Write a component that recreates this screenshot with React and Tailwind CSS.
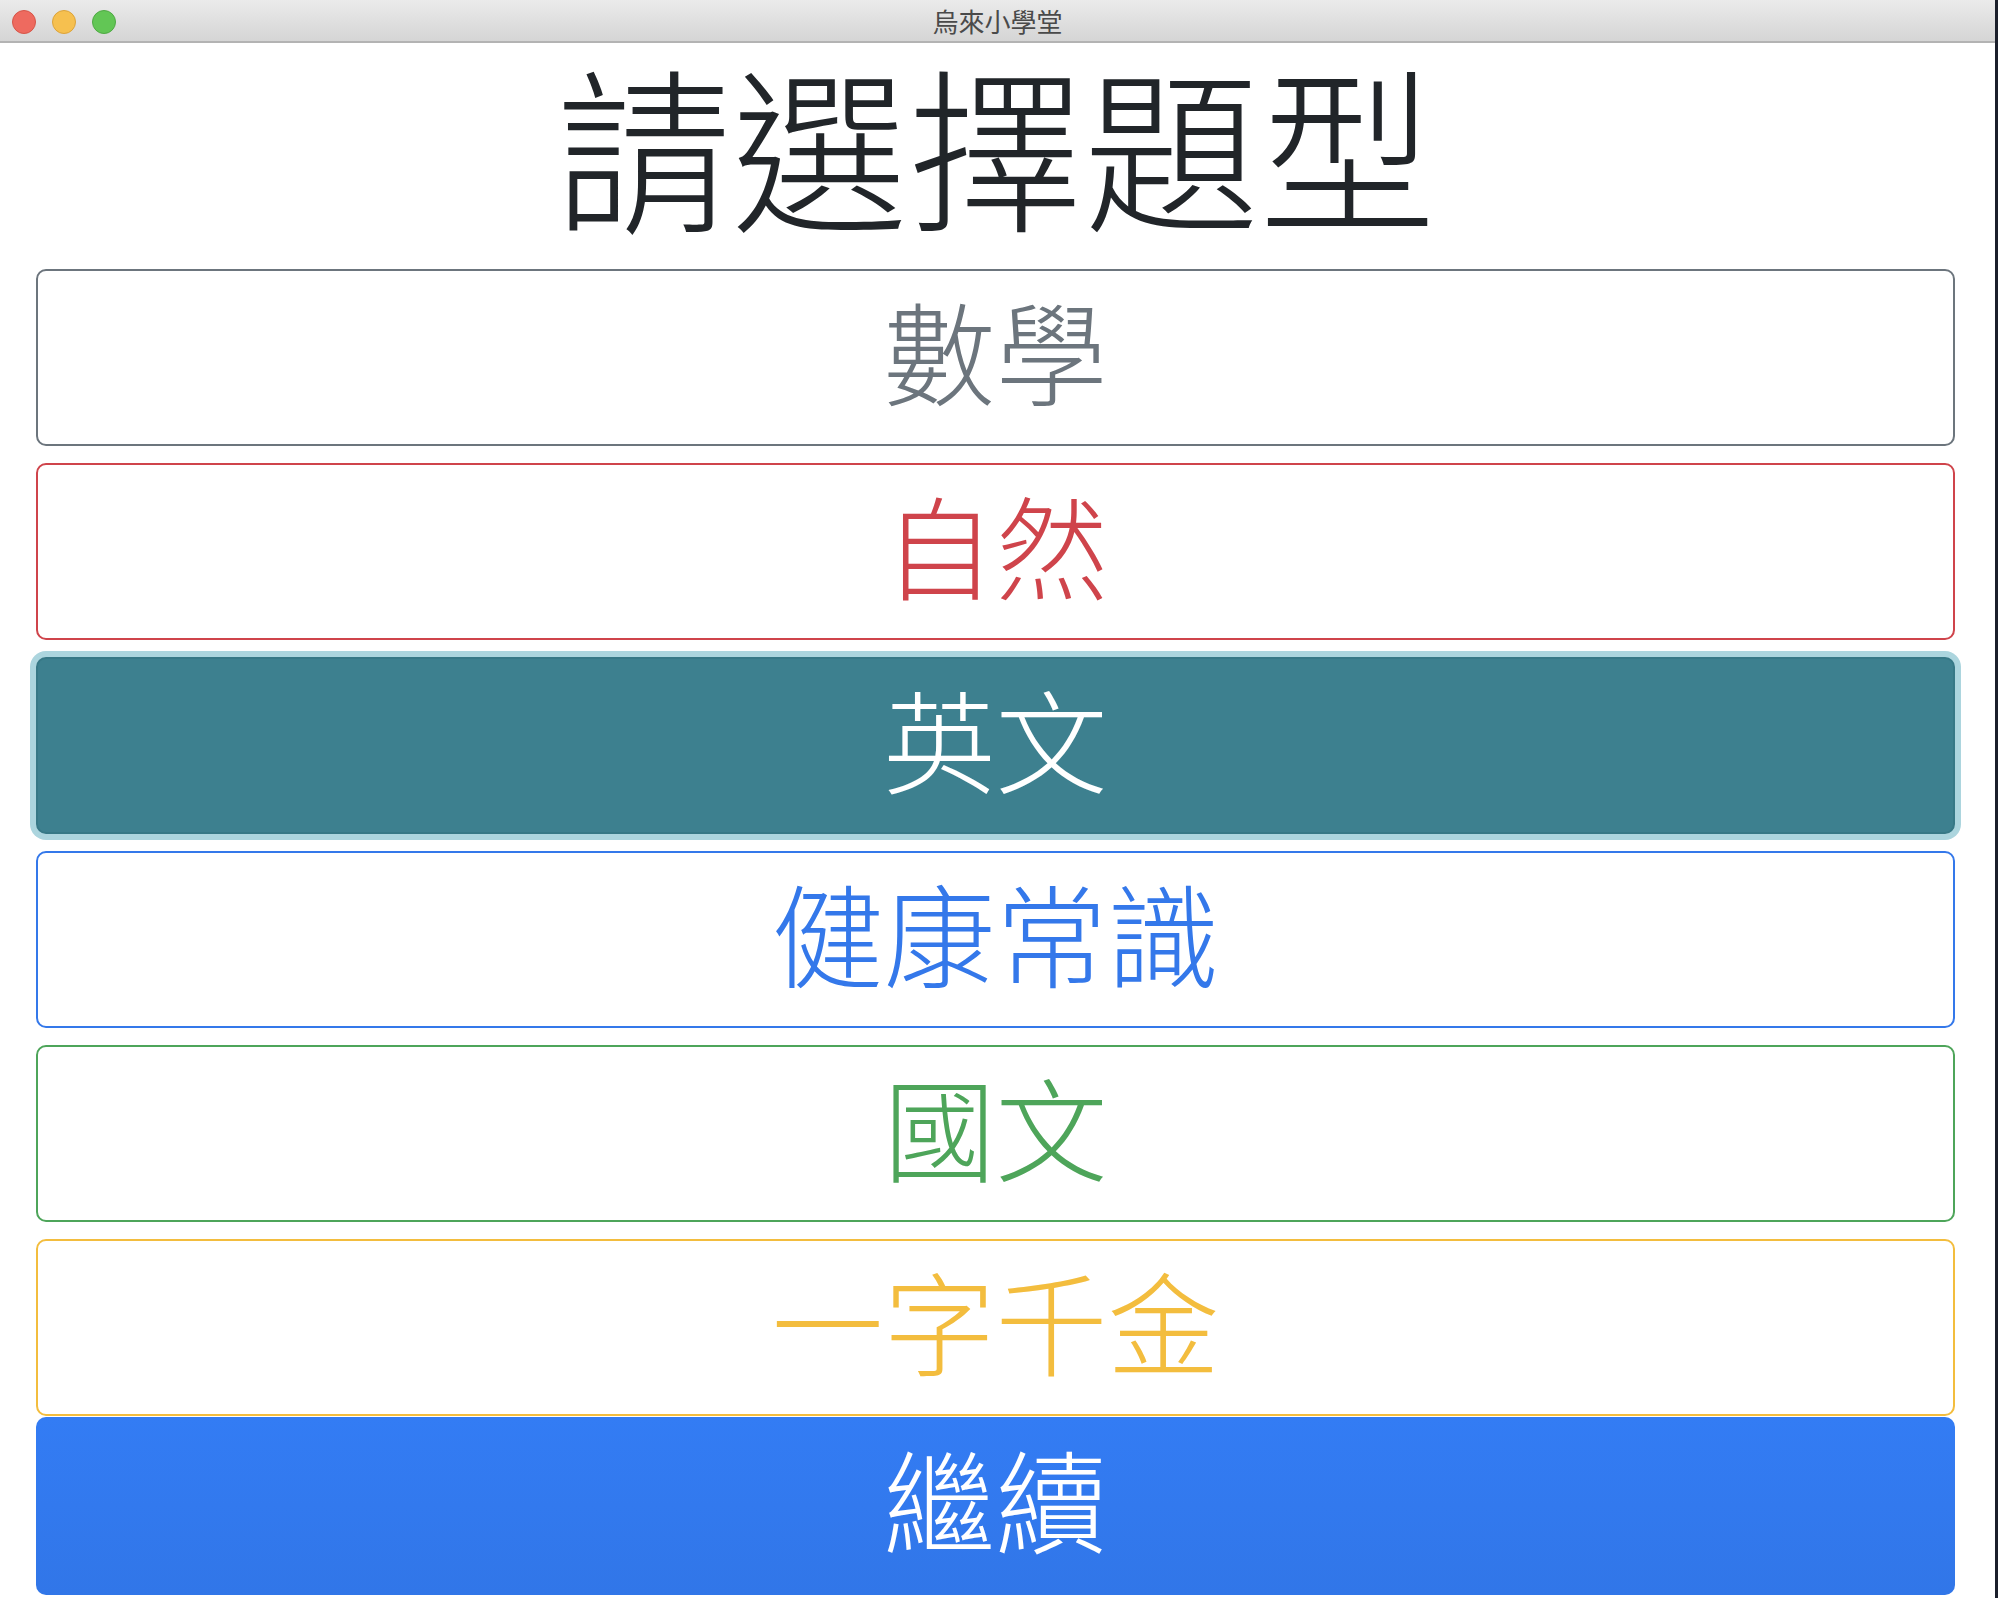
import React from 'react';

const subjects = [
  { label: '數學', cls: 'border-[#6c757d] text-[#6c757d] bg-white' },
  { label: '自然', cls: 'border-[#cf444b] text-[#cf444b] bg-white' },
  { label: '英文', cls: 'border-[#377886] text-white bg-[#3d808f] shadow-[0_0_0_6px_#acd5de]' },
  { label: '健康常識', cls: 'border-[#3478ea] text-[#3478ea] bg-white' },
  { label: '國文', cls: 'border-[#4ea55a] text-[#4ea55a] bg-white' },
  { label: '一字千金', cls: 'border-[#f3bd3e] text-[#f3bd3e] bg-white' },
];

const TitleBar = () => (
  <div className="relative z-10 h-[43px] flex items-center justify-center bg-gradient-to-b from-[#ebebeb] to-[#d5d5d5] border-b-2 border-[#b3b3b3]">
    <div className="absolute left-[12px] top-[10px] flex gap-[16px]">
      <span className="w-[24px] h-[24px] rounded-full bg-[#ee6a5f] border border-[#d65548]" />
      <span className="w-[24px] h-[24px] rounded-full bg-[#f6c04f] border border-[#dca33a]" />
      <span className="w-[24px] h-[24px] rounded-full bg-[#62c655] border border-[#4fa944]" />
    </div>
    <span className="text-[26px] text-[#4a4a4a] leading-[30px]">烏來小學堂</span>
  </div>
);

export default function App() {
  return (
    <div
      className="w-[1998px] h-[1598px] flex bg-white overflow-hidden"
      style={{ fontFamily: '"Noto Sans CJK TC", "Noto Sans", sans-serif' }}
    >
      <div className="flex-1 flex flex-col">
        <TitleBar />
        <div className="flex flex-col pl-[36px] pr-[40px]">
          <div className="h-[226px] pt-[2px] flex justify-center">
            <h1 className="text-[176px] font-light text-[#212529] leading-[196px]">
              請選擇題型
            </h1>
          </div>
          <div className="flex flex-col gap-[17px]">
            {subjects.map((s) => (
              <button
                key={s.label}
                className={`h-[177px] w-full rounded-[10px] border-2 flex items-center justify-center text-[112px] font-light leading-none pb-[18px] ${s.cls}`}
              >
                {s.label}
              </button>
            ))}
          </div>
          <button className="mt-[1px] h-[178px] w-full rounded-[10px] bg-gradient-to-b from-[#337cf4] to-[#3176e8] text-white flex items-center justify-center text-[112px] font-light leading-none pb-[18px]">
            繼續
          </button>
        </div>
      </div>
      <div className="w-[3px] bg-[#1b1f2b]" />
    </div>
  );
}
